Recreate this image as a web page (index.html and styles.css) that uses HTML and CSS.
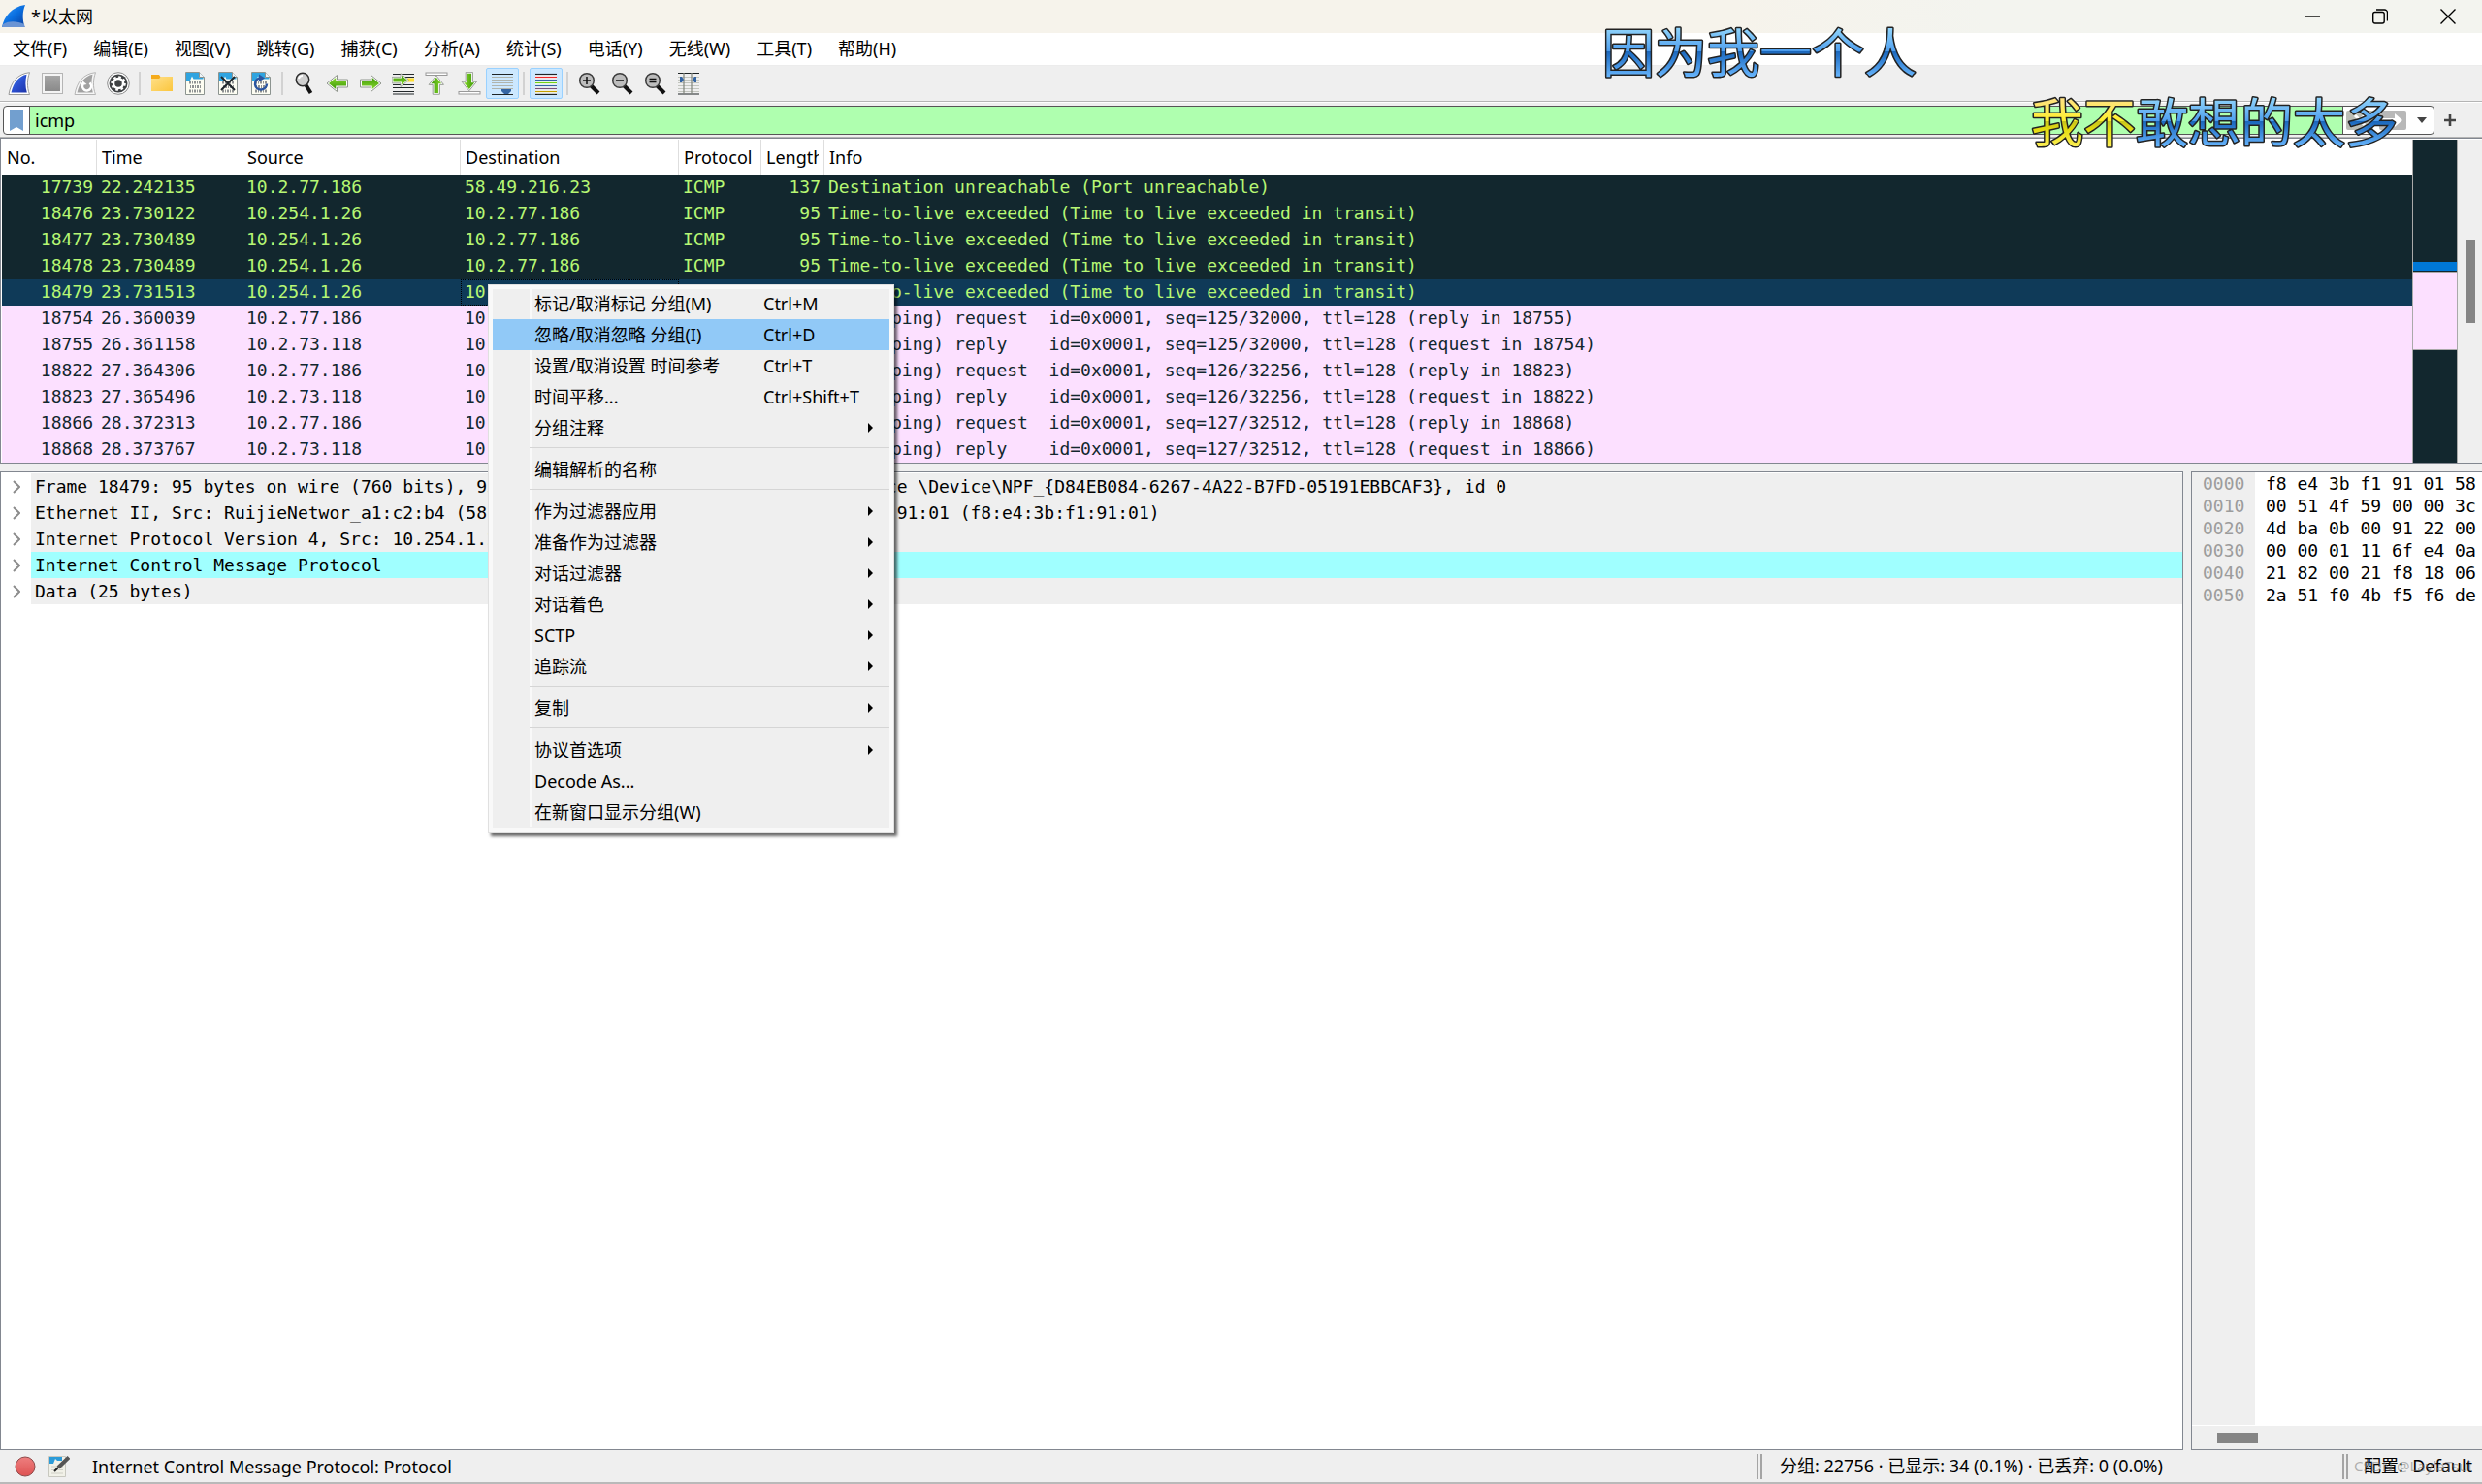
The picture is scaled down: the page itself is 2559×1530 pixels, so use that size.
FILE: index.html
```html
<!DOCTYPE html>
<html lang="zh-CN">
<head>
<meta charset="utf-8">
<title>*以太网</title>
<link rel="stylesheet" href="styles.css">
</head>
<body>
<svg class="defs" width="0" height="0" aria-hidden="true">
  <defs>
    <linearGradient id="g-fin" x1="0" y1="0" x2="1" y2="1"><stop offset="0" stop-color="#3f86e8"/><stop offset=".5" stop-color="#2b4fd0"/><stop offset="1" stop-color="#1c33a8"/></linearGradient>
    <linearGradient id="g-logo" x1="0" y1="0" x2="1" y2="1"><stop offset="0" stop-color="#3aa0ff"/><stop offset=".5" stop-color="#0a6fe0"/><stop offset="1" stop-color="#0b3d9c"/></linearGradient>
    <linearGradient id="g-green" x1="0" y1="0" x2="0" y2="1"><stop offset="0" stop-color="#86d62c"/><stop offset="1" stop-color="#3f9a08"/></linearGradient>
    <linearGradient id="g-gray" x1="0" y1="0" x2="0" y2="1"><stop offset="0" stop-color="#a6a6a6"/><stop offset="1" stop-color="#8a8a8a"/></linearGradient>
    <linearGradient id="g-folder" x1="0" y1="0" x2="1" y2="1"><stop offset="0" stop-color="#ffe08a"/><stop offset="1" stop-color="#fbc63e"/></linearGradient>
    <linearGradient id="g-red" x1="0" y1="0" x2="0" y2="1"><stop offset="0" stop-color="#ee7f7f"/><stop offset="1" stop-color="#de5252"/></linearGradient>
    <linearGradient id="g-blue-text" gradientUnits="userSpaceOnUse" x1="0" y1="6" x2="0" y2="58"><stop offset="0" stop-color="#93d6fb"/><stop offset=".47" stop-color="#4f9fee"/><stop offset=".49" stop-color="#1c68bc"/><stop offset=".6" stop-color="#2a78cc"/><stop offset="1" stop-color="#6ab8ff"/></linearGradient>
    <linearGradient id="g-yellow-text" gradientUnits="userSpaceOnUse" x1="0" y1="6" x2="0" y2="58"><stop offset="0" stop-color="#ffe08a"/><stop offset=".47" stop-color="#fff02e"/><stop offset=".49" stop-color="#c8c41c"/><stop offset=".65" stop-color="#e4dc10"/><stop offset="1" stop-color="#fff05a"/></linearGradient>
    <symbol id="i-doc" viewBox="0 0 24 24">
      <path d="M2.500 .5h14l5 5v18h-19z" fill="#fdfdf2" stroke="#8c9490"/>
      <path d="M3 1h13.500v5h4v1.500H10.500L9 4.500 7 9H3z" fill="#2fa4e0"/>
      <path d="M16.500 .5v5h5" fill="#eef4f8" stroke="#8c9490"/>
      <g fill="none" stroke="#8f9293" stroke-width="3" stroke-dasharray="2 1 1 1"><path d="M6 11h12"/><path d="M6 15.500h12" stroke-dashoffset="2"/><path d="M6 20h12"/></g>
    </symbol>
    <symbol id="i-lens" viewBox="0 0 24 24">
      <path d="M13 14l8 8" stroke="#111" stroke-width="4"/>
      <circle cx="9" cy="9" r="7.300" fill="#bdbdbd" stroke="#3c3c3c" stroke-width="1.500"/>
    </symbol>
    <symbol id="i-arrow" viewBox="0 0 24 24">
      <path d="M1 12L11.500 3.500V8H22.500v8H11.500v4.500z" fill="#fff" stroke="#8f958c"/>
      <path d="M3 12L10.300 6V9.500H21v5H10.300V18z" fill="url(#g-green)"/>
    </symbol>
  </defs>
</svg>

<header class="titlebar">
  <svg class="logo" viewBox="0 0 24 24"><path d="M0 23C2 12 10 2 24 0c-3 7-3 15-.5 23z" fill="url(#g-logo)"/><path d="M1 20c7-4 15-3 22 0l.5 3H0z" fill="#6a94d4"/></svg>
  <h1 class="title">*以太网</h1>
  <div class="window-buttons">
    <button class="window-button" aria-label="最小化"><svg viewBox="0 0 16 16"><path d="M0 8h16" class="thin"/></svg></button>
    <button class="window-button" aria-label="还原"><svg viewBox="0 0 16 16"><rect x=".7" y="3.500" width="11.500" height="11.500" rx="2" class="thin"/><path d="M4 1h8.500a3 3 0 013 3v8.500" class="thin"/></svg></button>
    <button class="window-button" aria-label="关闭"><svg viewBox="0 0 16 16"><path d="M.5 .5l15 15M15.500 .5l-15 15" class="thin"/></svg></button>
  </div>
</header>

<nav class="menubar">
  <button>文件(F)</button><button>编辑(E)</button><button>视图(V)</button><button>跳转(G)</button><button>捕获(C)</button><button>分析(A)</button><button>统计(S)</button><button>电话(Y)</button><button>无线(W)</button><button>工具(T)</button><button>帮助(H)</button>
</nav>

<div class="toolbar" role="toolbar">
  <div class="tool-group">
    <button class="tool" aria-label="开始捕获"><svg viewBox="0 0 24 24"><path d="M1 23.500C3 11 10 2 22.500 .7c-2.500 7-3 15 0 22.800z" fill="#fff" stroke="#9a9a9a"/><path d="M3.500 21.500C6 11 11.500 4.500 19.500 2.800c-1.500 6-1.500 13 .3 18.700z" fill="url(#g-fin)"/></svg></button>
    <button class="tool" aria-label="停止捕获"><svg viewBox="0 0 24 24"><rect x="1.500" y="1.500" width="21" height="21" fill="#f4f4f4" stroke="#b5b5b5"/><rect x="4" y="4" width="16" height="16" fill="url(#g-gray)"/></svg></button>
    <button class="tool" aria-label="重新开始捕获"><svg viewBox="0 0 24 24"><path d="M1 23.500C3 11 10 2 22.500 .7c-2.500 7-3 15 0 22.800z" fill="#f6f6f6" stroke="#b5b5b5"/><path d="M3.500 21.500C6 11 11.500 4.500 19.500 2.800c-1.500 6-1.500 13 .3 18.700z" fill="#a2a2a2"/><path d="M9.500 13a4.500 4.500 0 107-1.500" fill="none" stroke="#fff" stroke-width="2.500"/><path d="M6.500 14.500l3-5 4 3.500z" fill="#fff"/></svg></button>
    <button class="tool" aria-label="捕获选项"><svg viewBox="0 0 24 24"><circle cx="12" cy="12" r="11.300" fill="#fff" stroke="#8a8a8a"/><circle cx="12" cy="12" r="9.500" fill="#3f4244"/><circle cx="12" cy="12" r="5" fill="none" stroke="#fff" stroke-width="2.500"/><circle cx="12" cy="12" r="6.800" fill="none" stroke="#fff" stroke-width="2" stroke-dasharray="2.700 2.640"/></svg></button>
  </div>
  <div class="tool-group">
    <button class="tool" aria-label="打开"><svg viewBox="0 0 24 24"><path d="M1 3h8l2 3h12v14H1z" fill="#f5ab1c"/><path d="M1 7h8l2-2h12v15H1z" fill="url(#g-folder)"/></svg></button>
    <button class="tool" aria-label="保存"><svg viewBox="0 0 24 24"><use href="#i-doc"/></svg></button>
    <button class="tool" aria-label="关闭文件"><svg viewBox="0 0 24 24"><use href="#i-doc"/><path d="M5 5l14 14M19 5L5 19" stroke="#20272b" stroke-width="2"/></svg></button>
    <button class="tool" aria-label="重新加载"><svg viewBox="0 0 24 24"><use href="#i-doc"/><path d="M11 6.500a6 6 0 107 6" fill="none" stroke="#2a55a0" stroke-width="2.500"/><path d="M10 2.500l6 4-6 4z" fill="#2a55a0"/></svg></button>
  </div>
  <div class="tool-group">
    <button class="tool" aria-label="查找"><svg viewBox="0 0 24 24"><path d="M13 13l5.500 9" stroke="#111" stroke-width="4"/><circle cx="10" cy="8" r="6.700" fill="#cfcfcf" stroke="#2c2c2c" stroke-width="1.500"/><path d="M6 7a4 4 0 014-3" stroke="#fff" stroke-width="2" fill="none"/></svg></button>
    <button class="tool" aria-label="后退"><svg viewBox="0 0 24 24"><use href="#i-arrow"/></svg></button>
    <button class="tool" aria-label="前进"><svg viewBox="0 0 24 24"><use href="#i-arrow" transform="rotate(180 12 12)"/></svg></button>
    <button class="tool" aria-label="转到分组"><svg viewBox="0 0 24 24"><path d="M1 2.500h22M1 13.500h22M1 16.500h22M1 20.500h22M1 23h22M14 5.500h9" stroke="#22282a" stroke-width="1.200"/><rect x="16" y="6.500" width="7" height="4" fill="#ffe033"/><g transform="translate(-1 -1) scale(.8)"><use href="#i-arrow" width="24" height="24" transform="rotate(180 12 12)"/></g></svg></button>
    <button class="tool" aria-label="首个分组"><svg viewBox="0 0 24 24"><rect x="1" y="1" width="22" height="2.500" fill="#fff" stroke="#999"/><g transform="translate(1 3) scale(.9)"><use href="#i-arrow" width="24" height="24" transform="rotate(90 12 12)"/></g></svg></button>
    <button class="tool" aria-label="最后分组"><svg viewBox="0 0 24 24"><rect x="1" y="20.500" width="22" height="2.500" fill="#fff" stroke="#999"/><g transform="translate(1 -1) scale(.9)"><use href="#i-arrow" width="24" height="24" transform="rotate(-90 12 12)"/></g></svg></button>
    <button class="tool checked" aria-label="自动滚动" aria-pressed="true"><svg viewBox="0 0 24 24"><path d="M1 2.500h22M1 23.500h22" stroke="#1e2426" stroke-width="1.200"/><path d="M1 5.500h22M1 8.500h22M1 11.500h22M1 14.500h22M1 17.500h22" stroke="#b0b4ac"/><path d="M11 18h10v2l-3 3h-4l-3-3z" fill="#3465a4"/></svg></button>
  </div>
  <div class="tool-group">
    <button class="tool checked" aria-label="着色" aria-pressed="true"><svg viewBox="0 0 24 24"><path d="M1 2h22v22H1z" fill="#f4f8fb"/><g stroke-width="1.200"><path d="M1 2.500h22" stroke="#1e2426"/><path d="M1 5.500h22" stroke="#ef2929"/><path d="M1 8.500h22" stroke="#3465a4"/><path d="M1 11.500h22" stroke="#73d216"/><path d="M1 14.500h22" stroke="#3465a4"/><path d="M1 17.500h22" stroke="#75507b"/><path d="M1 20.500h22" stroke="#c4a000"/><path d="M1 23.400h22" stroke="#1e2426"/></g></svg></button>
  </div>
  <div class="tool-group">
    <button class="tool" aria-label="放大"><svg viewBox="0 0 24 24"><use href="#i-lens"/><path d="M5 9h8M9 5v8" stroke="#111" stroke-width="1.500"/></svg></button>
    <button class="tool" aria-label="缩小"><svg viewBox="0 0 24 24"><use href="#i-lens"/><path d="M5 9h8" stroke="#111" stroke-width="1.500"/></svg></button>
    <button class="tool" aria-label="普通大小"><svg viewBox="0 0 24 24"><use href="#i-lens"/><path d="M5.500 7.500h7M5.500 10.500h7" stroke="#111" stroke-width="1.300"/></svg></button>
    <button class="tool" aria-label="调整列宽"><svg viewBox="0 0 24 24"><path d="M1 5.500h22M1 8.500h22M1 11.500h22M1 14.500h22M1 17.500h22M1 20.500h22" stroke="#c2c5be"/><path d="M1 1.500h22M1 23h22" stroke="#1e2426" stroke-width="1.200"/><path d="M7 1v22M15 1v22" stroke="#80857d" stroke-width="1.200"/><path d="M3 5h2l2 3-2 3H3zM20 5h-2l-2 3 2 3h2z" fill="#3465a4"/></svg></button>
  </div>
</div>

<form class="filterbar" onsubmit="return false">
  <div class="filterbox">
    <button class="bookmark" type="button" aria-label="书签"><svg viewBox="0 0 14 22"><path d="M0 0h14v22l-7-4-7 4z" fill="#729fcf"/></svg></button>
    <input class="filter-input" type="text" value="icmp" aria-label="显示过滤器" spellcheck="false">
    <button class="filter-button" type="button" aria-label="清除"><svg viewBox="0 0 28 20"><rect width="28" height="20" rx="2" fill="#babdb6"/><path d="M9 5l10 10M19 5L9 15" stroke="#fff" stroke-width="3"/></svg></button>
    <button class="filter-button" type="button" aria-label="应用"><svg viewBox="0 0 28 20"><rect width="28" height="20" rx="2" fill="#b8b8b8"/><path d="M3 8h13V3l8 7-8 7v-5H3z" fill="#fff"/></svg></button>
    <button class="filter-drop" type="button" aria-label="历史"><svg viewBox="0 0 10 6"><path d="M0 0h10L5 6z" fill="#444"/></svg></button>
  </div>
  <button class="filter-add" type="button" aria-label="添加过滤按钮"><svg viewBox="0 0 14 14"><path d="M7 0v14M0 7h14" stroke="#444" stroke-width="3"/></svg></button>
</form>

<section class="packets">
  <table class="packet-table">
    <colgroup><col class="c-no"><col class="c-time"><col class="c-addr"><col class="c-addr"><col class="c-proto"><col class="c-len"><col></colgroup>
    <thead><tr><th>No.</th><th>Time</th><th>Source</th><th>Destination</th><th>Protocol</th><th><span class="clipped">Length</span></th><th>Info</th></tr></thead>
    <tbody>
      <tr class="error"><td>17739</td><td>22.242135</td><td>10.2.77.186</td><td>58.49.216.23</td><td>ICMP</td><td>137</td><td>Destination unreachable (Port unreachable)</td></tr>
      <tr class="error"><td>18476</td><td>23.730122</td><td>10.254.1.26</td><td>10.2.77.186</td><td>ICMP</td><td>95</td><td>Time-to-live exceeded (Time to live exceeded in transit)</td></tr>
      <tr class="error"><td>18477</td><td>23.730489</td><td>10.254.1.26</td><td>10.2.77.186</td><td>ICMP</td><td>95</td><td>Time-to-live exceeded (Time to live exceeded in transit)</td></tr>
      <tr class="error"><td>18478</td><td>23.730489</td><td>10.254.1.26</td><td>10.2.77.186</td><td>ICMP</td><td>95</td><td>Time-to-live exceeded (Time to live exceeded in transit)</td></tr>
      <tr class="error selected"><td>18479</td><td>23.731513</td><td>10.254.1.26</td><td class="current">10.2.77.186</td><td>ICMP</td><td>95</td><td>Time-to-live exceeded (Time to live exceeded in transit)</td></tr>
      <tr><td>18754</td><td>26.360039</td><td>10.2.77.186</td><td>10.2.73.118</td><td>ICMP</td><td>74</td><td>Echo (ping) request  id=0x0001, seq=125/32000, ttl=128 (reply in 18755)</td></tr>
      <tr><td>18755</td><td>26.361158</td><td>10.2.73.118</td><td>10.2.77.186</td><td>ICMP</td><td>74</td><td>Echo (ping) reply    id=0x0001, seq=125/32000, ttl=128 (request in 18754)</td></tr>
      <tr><td>18822</td><td>27.364306</td><td>10.2.77.186</td><td>10.2.73.118</td><td>ICMP</td><td>74</td><td>Echo (ping) request  id=0x0001, seq=126/32256, ttl=128 (reply in 18823)</td></tr>
      <tr><td>18823</td><td>27.365496</td><td>10.2.73.118</td><td>10.2.77.186</td><td>ICMP</td><td>74</td><td>Echo (ping) reply    id=0x0001, seq=126/32256, ttl=128 (request in 18822)</td></tr>
      <tr><td>18866</td><td>28.372313</td><td>10.2.77.186</td><td>10.2.73.118</td><td>ICMP</td><td>74</td><td>Echo (ping) request  id=0x0001, seq=127/32512, ttl=128 (reply in 18868)</td></tr>
      <tr><td>18868</td><td>28.373767</td><td>10.2.73.118</td><td>10.2.77.186</td><td>ICMP</td><td>74</td><td>Echo (ping) reply    id=0x0001, seq=127/32512, ttl=128 (request in 18866)</td></tr>
    </tbody>
  </table>
  <div class="minimap"><span class="map-dark"></span><span class="map-current"></span><span class="map-echo"></span><span class="map-rest"></span></div>
  <div class="vscroll"><span class="vthumb"></span></div>
</section>

<main class="lower">
  <section class="details">
    <ul class="tree">
      <li><svg viewBox="0 0 8 14"><path d="M1 1l6 6-6 6"/></svg><span>Frame 18479: 95 bytes on wire (760 bits), 95 bytes captured (760 bits) on interface \Device\NPF_{D84EB084-6267-4A22-B7FD-05191EBBCAF3}, id 0</span></li>
      <li><svg viewBox="0 0 8 14"><path d="M1 1l6 6-6 6"/></svg><span>Ethernet II, Src: RuijieNetwor_a1:c2:b4 (58:69:6c:a1:c2:b4), Dst: IntelCorpora_f1:91:01 (f8:e4:3b:f1:91:01)</span></li>
      <li><svg viewBox="0 0 8 14"><path d="M1 1l6 6-6 6"/></svg><span>Internet Protocol Version 4, Src: 10.254.1.26, Dst: 10.2.77.186</span></li>
      <li class="active"><svg viewBox="0 0 8 14"><path d="M1 1l6 6-6 6"/></svg><span>Internet Control Message Protocol</span></li>
      <li><svg viewBox="0 0 8 14"><path d="M1 1l6 6-6 6"/></svg><span>Data (25 bytes)</span></li>
    </ul>
  </section>
  <section class="bytes">
    <div class="hex">
      <pre class="offsets">0000
0010
0020
0030
0040
0050</pre>
      <pre class="octets">f8 e4 3b f1 91 01 58
00 51 4f 59 00 00 3c
4d ba 0b 00 91 22 00
00 00 01 11 6f e4 0a
21 82 00 21 f8 18 06
2a 51 f0 4b f5 f6 de</pre>
    </div>
    <div class="hscroll"><span class="hthumb"></span></div>
  </section>
</main>

<footer class="statusbar">
  <button class="status-icon" aria-label="专家信息"><svg viewBox="0 0 22 22"><circle cx="11" cy="11" r="10" fill="url(#g-red)" stroke="#8f4a4a"/></svg></button>
  <button class="status-icon" aria-label="捕获文件注释"><svg viewBox="0 0 22 22"><path d="M.5 .5h17v21H.5z" fill="#f1f1e8" stroke="#c8c8c0"/><path d="M1 1h13v4H9L7 3 5 8H1z" fill="#2c9bd8"/><path d="M3 11h12M3 14.500h12M3 18h12" stroke="#cfcfc6"/><path d="M21 1.500L10 12" stroke="#555" stroke-width="4"/><path d="M10 12l-4 4" stroke="#222" stroke-width="2"/></svg></button>
  <span class="status-text">Internet Control Message Protocol: Protocol</span>
  <span class="status-counts">分组: 22756 · 已显示: 34 (0.1%) · 已丢弃: 0 (0.0%)</span>
  <span class="status-profile">配置:&nbsp; Default<span class="watermark">CSDN @LaylaTsui</span></span>
</footer>

<div class="context-menu" role="menu">
  <button>标记/取消标记 分组(M)<kbd>Ctrl+M</kbd></button>
  <button class="hover">忽略/取消忽略 分组(I)<kbd>Ctrl+D</kbd></button>
  <button>设置/取消设置 时间参考<kbd>Ctrl+T</kbd></button>
  <button>时间平移...<kbd>Ctrl+Shift+T</kbd></button>
  <button class="sub">分组注释</button>
  <hr>
  <button>编辑解析的名称</button>
  <hr>
  <button class="sub">作为过滤器应用</button>
  <button class="sub">准备作为过滤器</button>
  <button class="sub">对话过滤器</button>
  <button class="sub">对话着色</button>
  <button class="sub">SCTP</button>
  <button class="sub">追踪流</button>
  <hr>
  <button class="sub">复制</button>
  <hr>
  <button class="sub">协议首选项</button>
  <button>Decode As...</button>
  <button>在新窗口显示分组(W)</button>
</div>

<svg class="lyric lyric-first" width="340" height="70"><text x="8" y="53" fill="url(#g-blue-text)">因为我一个人</text></svg>
<svg class="lyric lyric-second" width="394" height="70"><text x="8" y="53" fill="url(#g-yellow-text)">我不</text><text x="116" y="53" fill="url(#g-blue-text)">敢想的太多</text></svg>
</body>
</html>
```
FILE: styles.css
```css
* { box-sizing: border-box; }

:root {
  --chrome: #efefef;
  --edge: #828790;
  --dark: #12272e;
  --lime: #b7f774;
  --pink: #fce0ff;
  --mono: "DejaVu Sans Mono", "Liberation Mono", monospace;
}

body {
  margin: 0;
  height: 100vh;
  display: flex;
  flex-direction: column;
  position: relative;
  overflow: hidden;
  background: var(--chrome);
  border-bottom: 2px solid #b9b9b9;
  color: #000;
  font: 18px/24px "Noto Sans", "Noto Sans CJK SC", sans-serif;
}

button {
  margin: 0;
  padding: 0;
  border: 0;
  background: none;
  color: inherit;
  font: inherit;
}

svg { display: block; }
.defs { position: absolute; }

/* title bar */
.titlebar {
  display: flex;
  align-items: center;
  height: 34px;
  padding-left: 2px;
  background: linear-gradient(90deg, #f6f3eb 70%, #f3f4ef 80%);
}
.logo { width: 24px; height: 24px; }
.title { margin: 0 0 0 6px; font-size: 18px; line-height: 22px; font-weight: 400; }
.window-buttons { display: flex; margin-left: auto; }
.window-button { width: 70px; height: 34px; display: grid; place-items: center; }
.window-button svg { width: 16px; height: 16px; }
.thin { fill: none; stroke: #000; stroke-width: 1.4; }

/* menu bar */
.menubar {
  display: flex;
  gap: 1px;
  height: 34px;
  padding-bottom: 2px;
  background: #fff;
  border-bottom: 1px solid #ececec;
}
.menubar button { padding: 0 13px; white-space: nowrap; }

/* toolbar */
.toolbar {
  display: flex;
  height: 37px;
  padding: 2px 3px;
  border-bottom: 1px solid #b4b4b4;
}
.tool-group { display: flex; }
.tool-group + .tool-group::before {
  content: "";
  width: 2px;
  height: 24px;
  margin: 4px 5px 4px 4px;
  background: #d2d2d2;
}
.tool {
  width: 34px;
  height: 32px;
  display: grid;
  place-items: center;
  border: 1px solid transparent;
  border-radius: 2px;
}
.tool svg { width: 24px; height: 24px; }
.tool.checked { background: #cce8ff; border-color: #99d1ff; }

/* display filter */
.filterbar {
  display: flex;
  align-items: center;
  height: 37px;
  padding: 3px 27px 2px 3px;
  border-top: 1px solid #fff;
  border-bottom: 1px solid #b4b4b4;
}
.filterbox {
  flex: 1;
  display: flex;
  align-items: center;
  height: 30px;
  border: 1px solid #555;
  border-radius: 4px;
  background: #fff;
  overflow: hidden;
}
.bookmark { width: 26px; height: 28px; display: grid; place-items: center; }
.bookmark svg { width: 14px; height: 22px; }
.filter-input {
  flex: 1;
  height: 28px;
  padding: 0 5px 1px;
  border: solid #555;
  border-width: 0 1px;
  outline: 0;
  background: #afffaf;
  font: inherit;
}
.filter-button { width: 34px; display: grid; place-items: center; }
.filter-button svg { width: 28px; height: 20px; }
.filter-drop { width: 25px; display: grid; place-items: center; }
.filter-drop svg { width: 10px; height: 6px; }
.filter-add { margin-left: 10px; }
.filter-add svg { width: 12px; height: 12px; }

/* packet list */
.packets {
  display: flex;
  border: 1px solid var(--edge);
  border-right: 0;
  background: #fff;
  padding: 1px 0 0 1px;
}
.packet-table {
  flex: 1;
  width: 0;
  table-layout: fixed;
  border-collapse: separate;
  border-spacing: 0;
  background: var(--pink);
}
.c-no { width: 98px; }
.c-time { width: 150px; }
.c-addr { width: 225px; }
.c-proto { width: 85px; }
.c-len { width: 65px; }
th {
  height: 36px;
  padding: 0 5px 1px;
  background: #fff;
  border-right: 1px solid #dedede;
  font-weight: 400;
  text-align: left;
  white-space: nowrap;
  overflow: hidden;
}
th:last-child { border-right: 0; }
.clipped { display: block; overflow: hidden; }
td {
  height: 27px;
  padding: 0 4px 2px;
  font: 18px/25px var(--mono);
  white-space: pre;
  overflow: hidden;
  color: var(--dark);
}
td:nth-child(1), td:nth-child(6) { text-align: right; }
.error td { background: var(--dark); color: var(--lime); }
.error.selected td { background: #0f3a58; }
td.current { outline: 1px dotted #000; outline-offset: -1px; }

.minimap {
  display: flex;
  flex-direction: column;
  width: 47px;
  border: solid #a9a9a9;
  border-width: 0 1px;
  background: var(--dark);
}
.map-dark { flex: 127; }
.map-current { flex: 9; background: #0078d7; }
.map-echo { flex: 79; margin-top: 1px; border: solid #a9a9a9; border-width: 1px 0; background: var(--pink); }
.map-rest { flex: 117; }
.vscroll { width: 25px; padding: 103px 7px 0 8px; background: var(--chrome); }
.vthumb { display: block; height: 86px; background: #858585; }

/* lower panes */
.lower {
  flex: 1;
  display: flex;
  gap: 8px;
  min-height: 0;
  padding-top: 8px;
}
.details {
  flex: 1;
  min-width: 0;
  border: 1px solid var(--edge);
  background: #fff;
}
.tree { margin: 0; padding: 1px 0 0; list-style: none; font: 18px/27px var(--mono); }
.tree li { display: flex; align-items: center; }
.tree svg { width: 8px; height: 14px; margin: 0 11px 0 12px; fill: none; stroke: #8c8c8c; stroke-width: 2; }
.tree span { flex: 1; padding-left: 4px; background: var(--chrome); white-space: pre; overflow: hidden; }
.tree .active span { background: #a0ffff; }

.bytes {
  width: 300px;
  display: flex;
  flex-direction: column;
  border: 1px solid var(--edge);
  border-right: 0;
  background: #fff;
}
.hex { flex: 1; display: flex; overflow: hidden; }
.hex pre { margin: 0; font: 18px/23px var(--mono); }
.offsets { width: 65px; padding-left: 11px; background: var(--chrome); color: #9c9c9c; }
.octets { padding-left: 11px; }
.hscroll { height: 25px; padding: 7px 0 0 26px; border-top: 1px solid #fff; background: var(--chrome); }
.hthumb { display: block; width: 42px; height: 11px; background: #858585; }

/* status bar */
.statusbar { display: flex; align-items: center; height: 33px; padding-left: 15px; }
.status-icon { margin-right: 13px; }
.status-icon svg { width: 22px; height: 22px; }
.status-text { flex: 1; margin-left: 10px; }
.status-counts, .status-profile {
  height: 26px;
  border-left: 6px double #a5a5a5;
  white-space: nowrap;
}
.status-counts { width: 604px; padding-left: 18px; }
.status-profile { position: relative; width: 144px; padding-left: 16px; }
.watermark { position: absolute; left: 6px; top: 0; color: rgba(120, 120, 120, .55); font-size: 15px; }

/* context menu */
.context-menu {
  position: absolute;
  left: 503px;
  top: 293px;
  width: 419px;
  padding: 3px 4px 5px;
  border: 1px solid #e0e0e0;
  background: linear-gradient(#f9f9f9, #f9f9f9) 38px 0 / 3px 100% no-repeat content-box, #efefef;
  box-shadow: inset 0 0 0 4px #f9f9f9, 3px 3px 3px rgba(0, 0, 0, .6);
}
.context-menu button {
  display: grid;
  grid-template-columns: 236px 1fr;
  align-items: center;
  width: 100%;
  height: 32px;
  padding-left: 43px;
  text-align: left;
  white-space: nowrap;
}
.context-menu kbd { font: inherit; }
.context-menu .hover { background: #91c9f7; }
.context-menu hr { height: 1px; margin: 4px 0 6px 38px; border: 0; background: #d5d5d5; }
.context-menu .sub::after {
  content: "";
  justify-self: end;
  margin-right: 17px;
  border: solid transparent;
  border-width: 5px 0 5px 5px;
  border-left-color: #000;
}

/* desktop lyrics floating above the window */
.lyric {
  position: absolute;
  pointer-events: none;
  overflow: visible;
  font: 400 54px/60px "Noto Sans CJK SC", sans-serif;
}
.lyric text { stroke: #222; stroke-width: 3px; paint-order: stroke; stroke-linejoin: round; }
.lyric-first { right: 575px; top: 22px; }
.lyric-second { right: 79px; top: 94px; }
```
